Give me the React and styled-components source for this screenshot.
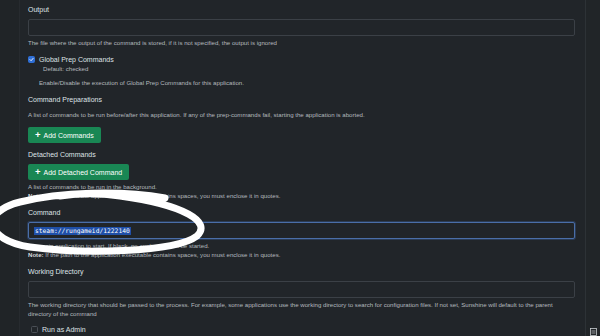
import React from "react";
import styled, { createGlobalStyle } from "styled-components";

const Global = createGlobalStyle`
  html, body { margin: 0; padding: 0; background: #212529; }
  body { width: 600px; height: 336px; overflow: hidden; font-family: "Liberation Sans", Arial, sans-serif; }
`;

const Page = styled.div`
  position: relative;
  width: 600px;
  height: 336px;
  display: grid;
  grid-template-columns: 20px 1fr 15px;
  background: #212529;
  overflow: hidden;
`;

const Gutter = styled.div`
  background: #202427;
  border-right: 1px solid #272b2f;
`;

const Rail = styled.div`
  border-left: 1px solid #2d3236;
  background: #212528;
  display: flex;
  flex-direction: column;
  justify-content: flex-end;
  align-items: center;
  padding-bottom: 7px;
`;

const Main = styled.div`
  padding: 5px 10px 0 8px;
  display: flex;
  flex-direction: column;
`;

const Label = styled.div`
  font-size: 7px;
  line-height: 10px;
  height: 10px;
  color: #dee2e6;
  margin-top: ${({ $mt }) => $mt || 0}px;
`;

const Input = styled.div`
  height: 17px;
  box-sizing: border-box;
  margin-top: 4px;
  border: 1px solid ${({ $focus }) => ($focus ? "#4a6ea8" : "#3b4046")};
  box-shadow: ${({ $focus }) => ($focus ? "0 0 0 1px rgba(60, 100, 170, 0.35)" : "none")};
  border-radius: 2px;
  background: #212529;
  display: flex;
  align-items: center;
  padding-left: 5px;
`;

const Selected = styled.span`
  font-family: "DejaVu Sans Mono", "Liberation Mono", monospace;
  font-size: 6.3px;
  line-height: 8px;
  color: #ffffff;
  background: #1f4fa8;
  padding: 0 1px;
`;

const Help = styled.div`
  font-size: 6.1px;
  line-height: 9px;
  color: #b4b9be;
  white-space: nowrap;
  margin-top: ${({ $mt }) => $mt || 0}px;
  b { color: #d6d9dc; font-weight: bold; }
`;

const CheckRow = styled.div`
  display: flex;
  align-items: center;
  gap: 4px;
  height: 10px;
  margin-top: ${({ $mt }) => $mt || 0}px;
  font-size: 7px;
  color: #dee2e6;
`;

const Box = styled.span`
  width: 7px;
  height: 7px;
  box-sizing: border-box;
  border-radius: 1.5px;
  margin-left: ${({ $ml }) => $ml || 0}px;
  display: inline-flex;
  align-items: center;
  justify-content: center;
  background: ${({ $on }) => ($on ? "#2f6fd6" : "transparent")};
  border: 1px solid ${({ $on }) => ($on ? "#2f6fd6" : "#4a4f55")};
`;

const Sub = styled.div`
  font-size: 6.1px;
  line-height: 8px;
  color: #b4b9be;
  padding-left: ${({ $indent }) => $indent || 0}px;
  margin-top: ${({ $mt }) => $mt || 0}px;
`;

const Button = styled.button`
  align-self: flex-start;
  height: 16px;
  margin-top: ${({ $mt }) => $mt || 0}px;
  padding: 0 7px;
  border: none;
  border-radius: 2px;
  background: #198754;
  color: #ffffff;
  font-family: "Liberation Sans", Arial, sans-serif;
  font-size: 7px;
  display: flex;
  align-items: center;
  gap: 3px;
  span.plus { font-size: 9.5px; line-height: 1; font-weight: bold; }
`;

const Overlay = styled.svg`
  position: absolute;
  left: 0;
  top: 0;
  pointer-events: none;
`;

function Check() {
  return (
    <svg width="5" height="5" viewBox="0 0 10 10">
      <path d="M2 5.2 L4.2 7.4 L8.2 2.8" stroke="#fff" strokeWidth="1.8" fill="none" strokeLinecap="round" />
    </svg>
  );
}

function TrayIcon() {
  return (
    <svg width="7" height="8" viewBox="0 0 7 8">
      <rect x="0.5" y="0.5" width="6" height="7" fill="none" stroke="#c8ccd0" strokeWidth="0.8" />
      <line x1="1.5" y1="3" x2="5.5" y2="3" stroke="#c8ccd0" strokeWidth="0.7" />
      <line x1="1.5" y1="5" x2="5.5" y2="5" stroke="#c8ccd0" strokeWidth="0.7" />
    </svg>
  );
}

export default function App() {
  return (
    <>
      <Global />
      <Page>
        <Gutter />
        <Main>
          <Label>Output</Label>
          <Input />
          <Help $mt={2}>The file where the output of the command is stored, if it is not specified, the output is ignored</Help>

          <CheckRow $mt={7}>
            <Box $on><Check /></Box>
            Global Prep Commands
          </CheckRow>
          <Sub $indent={15} $mt={1}>Default: checked</Sub>
          <Sub $indent={11} $mt={6}>Enable/Disable the execution of Global Prep Commands for this application.</Sub>

          <Label $mt={8}>Command Preparations</Label>
          <Help $mt={5}>A list of commands to be run before/after this application. If any of the prep-commands fail, starting the application is aborted.</Help>
          <Button $mt={8}><span className="plus">+</span>Add Commands</Button>

          <Label $mt={7}>Detached Commands</Label>
          <Button $mt={4}><span className="plus">+</span>Add Detached Command</Button>
          <Help $mt={2}>A list of commands to be run in the background.</Help>
          <Help><b>Note:</b> If the path to the application executable contains spaces, you must enclose it in quotes.</Help>

          <Label $mt={8}>Command</Label>
          <Input $focus><Selected>steam://rungameid/1222140</Selected></Input>
          <Help $mt={2}>The main application to start. If blank, no application will be started.</Help>
          <Help><b>Note:</b> If the path to the application executable contains spaces, you must enclose it in quotes.</Help>

          <Label $mt={8}>Working Directory</Label>
          <Input />
          <Help $mt={2}>The working directory that should be passed to the process. For example, some applications use the working directory to search for configuration files. If not set, Sunshine will default to the parent</Help>
          <Help>directory of the command</Help>

          <CheckRow $mt={6}>
            <Box $ml={3} />
            Run as Admin
          </CheckRow>
          <Sub $indent={15} $mt={1}>Default: unchecked</Sub>
        </Main>
        <Rail>
          <TrayIcon />
        </Rail>
        <Overlay width="600" height="336" viewBox="0 0 600 336">
          <path
            d="M 165 198 C 120 190, 60 192, 20 202 C -20 212, -15 240, 30 247 C 80 254, 175 253, 197 236 C 212 222, 185 205, 120 196 C 100 193, 80 193, 60 196"
            fill="none"
            stroke="#ffffff"
            strokeWidth="7"
            strokeLinecap="round"
          />
        </Overlay>
      </Page>
    </>
  );
}
